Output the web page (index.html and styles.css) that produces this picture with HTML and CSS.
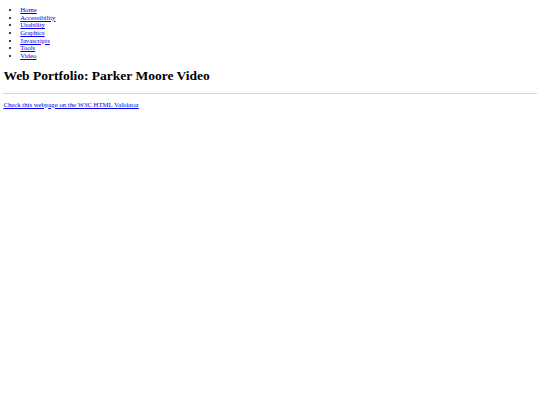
FILE: index.html
```html
<!DOCTYPE html>
<html lang="en">
<head>
<meta charset="utf-8">
<title>Web Portfolio: Parker Moore Video</title>
<link rel="stylesheet" href="styles.css">
</head>
<body class="page">
<nav class="site-nav">
<ul class="nav-list">
<li><a href="#">Home</a></li>
<li><a href="#">Accessibility</a></li>
<li><a href="#">Usability</a></li>
<li><a href="#">Graphics</a></li>
<li><a href="#">Javascripts</a></li>
<li><a href="#">Tools</a></li>
<li><a href="#">Video</a></li>
</ul>
</nav>
<h1 class="title">Web Portfolio: Parker Moore Video</h1>
<hr class="rule">
<p class="validator"><a href="#">Check this webpage on the W3C HTML Validator</a></p>
</body>
</html>
```
FILE: styles.css
```css
.page {
  margin: 3.375px;
  font-family: "Liberation Serif", "Times New Roman", serif;
  font-size: 6.75px;
  line-height: 7.7px;
  color: #000;
  background: #fff;
}
.page a { color: #0000ee; }
.nav-list {
  margin: 2.6px 0 6.75px;
  padding-left: 16.875px;
}
.title {
  font-size: 13.5px;
  line-height: 15.5px;
  margin: 8.3px 0 9.3px;
  font-weight: bold;
}
.rule {
  margin: 3.375px 0;
  border: 0;
  height: 1.5px;
  background: #d4d4d4;
}
.validator { margin: 6.4px 0; }
```
